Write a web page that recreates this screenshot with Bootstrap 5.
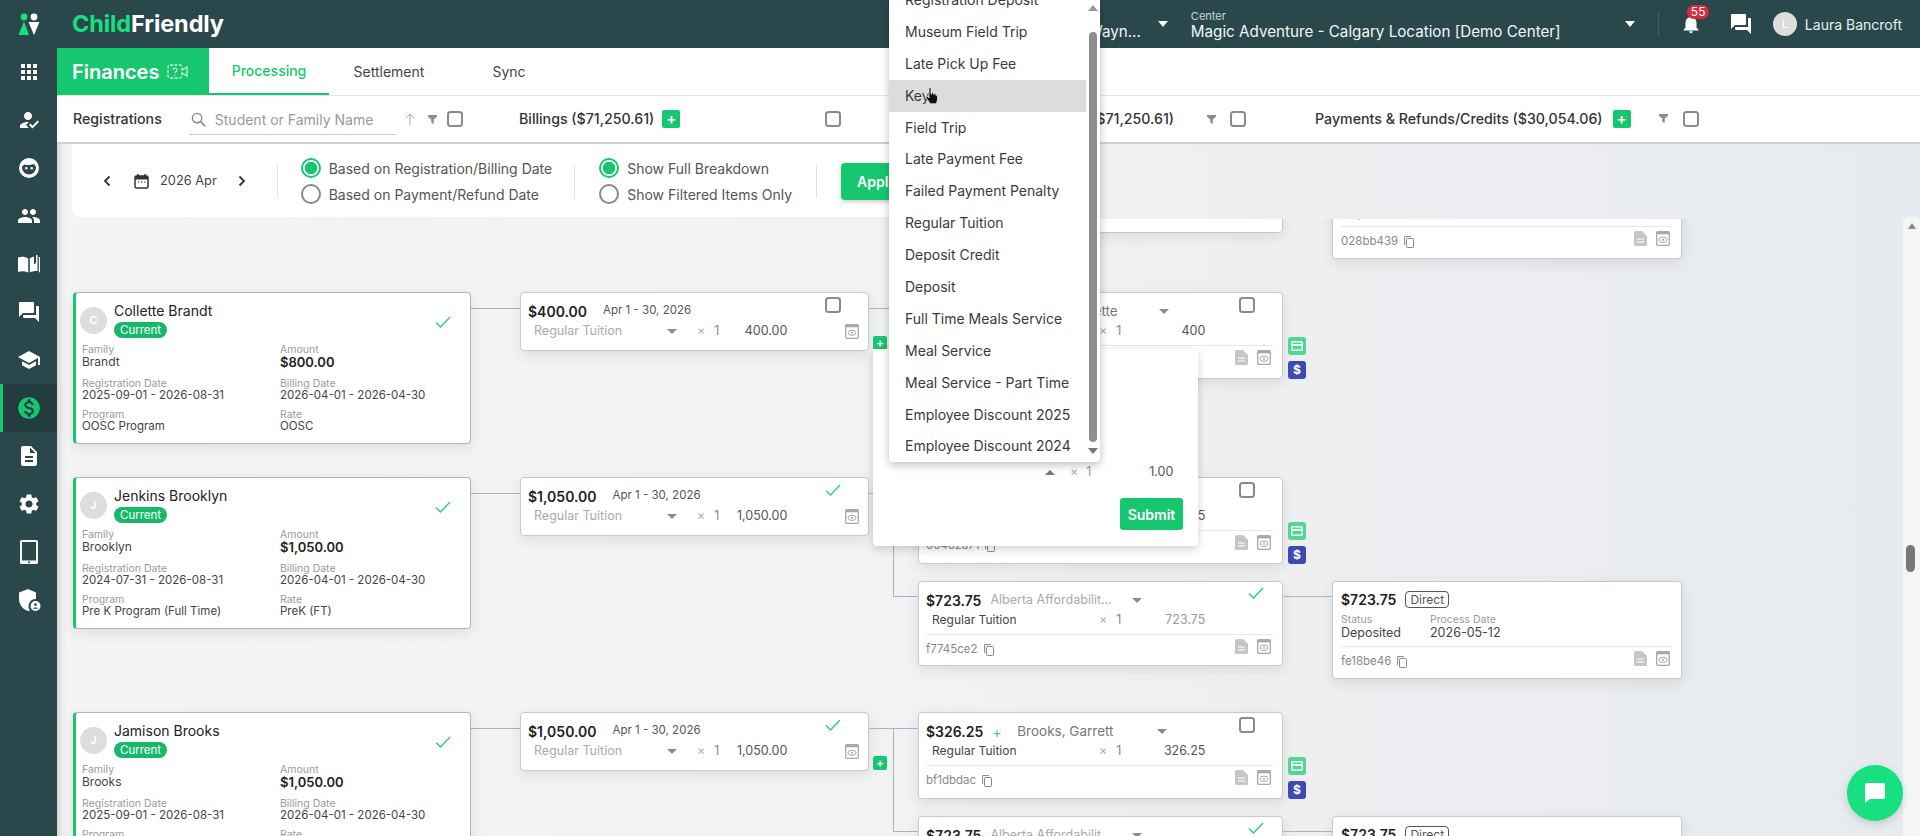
<!DOCTYPE html>
<html lang="en">
<head>
<meta charset="utf-8">
<title>ChildFriendly - Finances</title>
<link href="https://cdn.jsdelivr.net/npm/bootstrap@5.3.0/dist/css/bootstrap.min.css" rel="stylesheet">
<style>
html,body{height:100%;}
body{font-family:Inter,"Noto Sans","Liberation Sans",sans-serif;font-size:14px;color:#333;overflow:hidden;background:#f4f4f5;}
.shell{height:836px;width:1920px;overflow:hidden;}
.min0{min-width:0;min-height:0;}
.flex-none{flex:none;}
/* sidebar */
.rail{width:57px;background:#2a484c;flex:none;z-index:3;}
.rail-item{height:48px;color:#fff;border-left:3px solid transparent;padding-right:3px;}
.rail-item.on{background:#223c40;border-left-color:#17c76f;}
.rail-item svg{width:24px;height:24px;fill:#fff;display:block;}
.rail-item.on svg{fill:#17c76f;width:26px;height:26px;}
/* top */
.topbar{height:48px;background:#2a484c;color:#fff;flex:none;}
.brand{font-size:23.5px;font-weight:700;letter-spacing:-.1px;margin-left:15px;line-height:1;color:#fff;}
.brand b{color:#19e07f;font-weight:700;}
.sel-wrap{line-height:1.15;padding-top:3px;}
.sel-lab{font-size:11px;color:#c9d3d4;display:block;height:12px;line-height:12px;}
.sel-val{font-size:15.2px;color:#f2f5f5;display:block;line-height:20px;white-space:nowrap;}
.owner{width:110px;margin-left:auto;}
.owner .sel-val{text-align:right;}
.tri-w{width:0;height:0;border-left:5px solid transparent;border-right:5px solid transparent;border-top:6px solid #fff;flex:none;}
.owner-tri{margin-left:17px;margin-right:23px;}
.center-sel{width:370px;}
.center-tri{margin-left:64px;}
.top-div{width:1px;height:24px;background:#3f5f63;margin-left:23px;}
.bell{margin-left:21px;width:22px;height:22px;}
.bell svg{width:22px;height:22px;fill:#fff;display:block;}
.bell-count{top:-8px;left:7px;background:#d72a3a;color:#fff;font-size:12px;line-height:14px;padding:0 4px;border-radius:7px;}
.talk{margin-left:27px;width:24px;height:24px;fill:#fff;}
.who-a{width:24px;height:24px;background:#ddd;color:#fff;font-size:11px;margin-left:20px;}
.who{font-size:14px;margin-left:8px;margin-right:18px;color:#e9eeee;white-space:nowrap;}
/* tabs */
.tabbar{height:48px;background:#fff;border-bottom:1px solid #e6e6e6;flex:none;}
.fin{width:152px;background:#17c76f;color:#fff;font-size:20px;font-weight:600;padding-left:15px;height:47px;}
.fin svg{width:21px;height:19px;margin-left:8px;stroke:#c9f2dd;fill:none;}
.tabx{width:120px;height:47px;color:#444;font-size:14px;text-decoration:none;}
.tabx.on{color:#17c76f;border-bottom:2px solid #17c76f;font-weight:500;}
/* column titles */
.titlebar{height:48px;background:#fff;border-bottom:2px solid #cfd0d1;flex:none;color:#333;}
.tt{font-weight:500;font-size:14.2px;white-space:nowrap;color:#333;}
.tc1{width:462px;padding-left:16px;}
.tc2{width:655px;}
.tc3{width:141px;}
.srch{width:207px;margin-left:27px;border-bottom:1px solid #ccc;height:32px;color:#999;font-size:14px;padding-top:2px;}
.srch svg{width:15px;height:15px;stroke:#888;fill:none;margin:0 9px 0 2px;}
.arrowup{width:12px;height:12px;stroke:#aaa;fill:none;margin-left:8px;}
.funnel{width:9px;height:11px;fill:#8b8b8b;flex:none;}
.reg-f{margin-left:12px;}
.box{width:16px;height:16px;margin:0;border:2px solid #8a8a8a;border-radius:2px;flex:none;background:#fff;}
.reg-box{margin-left:10px;}
.plus{width:18px;height:18px;background:#17c76f;color:#fff;border-radius:2px;font-size:15px;line-height:17px;text-align:center;font-weight:600;flex:none;}
.branch .plus{width:14px;height:14px;font-size:12px;line-height:13px;margin:27px 0 0 4px;}
.billing-box{margin-left:145px;}
.item-f{margin-left:33px;}
.item-box{margin-left:14px;}
.pay-plus{margin-left:10px;}
.pay-f{margin-left:28px;}
.pay-box{margin-left:15px;}
/* content */
.canvas{background:linear-gradient(90deg,#f4f4f5 0%,#f1f2f3 45%,#e7eaee 100%);box-shadow:inset 9px 0 8px -7px rgba(0,0,0,.18);}
.panel{margin-left:15px;width:1000px;height:73px;background:#fff;border-radius:0 0 8px 8px;flex:none;font-size:14px;color:#555;padding-top:1px;}
.chev{width:8px;height:12px;stroke:#333;fill:none;stroke-width:1.8;}
.cal{width:15px;height:15px;}
.month{font-size:12.8px;color:#444;}
.vdiv{width:1px;height:33px;background:#e3e3e3;flex:none;}
.rad{width:20px;height:20px;margin:0;border:2px solid #888;background-color:#fff;flex:none;}
.rad:checked{border-color:#17c76f;background-color:#fff;background-image:radial-gradient(circle,#17c76f 0 6px,#fff 6.5px);}
.radline{height:26px;margin:0;}
.apply{background:#17c76f;color:#fff;border:0;font-weight:600;font-size:14px;width:110px;height:37px;border-radius:4px;text-align:left;padding-left:16px;box-shadow:0 2px 4px rgba(0,0,0,.2);}
.panel-prev{margin-left:31px;}
.panel-cal{margin-left:23px;}
.panel-month{margin-left:11px;}
.panel-next{margin-left:21px;}
.panel-d1{margin-left:31px;}
.panel-r1{margin-left:23px;}
.panel-d2{margin-left:22px;}
.panel-r2{margin-left:24px;}
.panel-d3{margin-left:24px;}
.panel-apply{margin-left:24px;}
.scroller{height:618px;margin-top:2px;overflow:hidden;flex:none;}
.tree{margin-top:-73px;padding-left:16px;}
.tgroup{display:flex;align-items:flex-start;margin-bottom:33px;}
.gap0{width:845px;flex:none;}
.cardx{background:#fff;border:1px solid #c9c9c9;border-radius:4px;box-shadow:0 4px 14px rgba(0,0,0,.09);flex:none;}
.regc{width:398px;height:152px;border-left:3px solid #17c76f;border-color:#b4b4b4 #b4b4b4 #b4b4b4 #17c76f;padding:10px 6px 0 4px;position:relative;}
.ava{width:27px;height:27px;background:#ddd;color:#fff;font-size:11px;font-weight:600;margin-top:4px;}
.nm{font-size:14px;line-height:16px;color:#222;font-weight:400;}
.head-gap{gap:7px;}
.cur{background:#17b86a;color:#fff;font-size:11.5px;line-height:16px;height:16px;padding:0 6px;border-radius:8px;font-weight:400;margin-top:3px;display:inline-block;vertical-align:top;}
.okk{width:16px;height:12px;stroke:#2ad083;fill:none;stroke-width:1.4;flex:none;}
.regc .okk{position:absolute;left:359px;top:23px;}
.grid2{display:grid;grid-template-columns:198px 1fr;grid-template-rows:34px 31px auto;margin:4px 0 0 2px;}
.lab{font-size:10.5px;line-height:12px;color:#9a9a9a;display:block;}
.val{font-size:11.5px;line-height:12px;color:#444;display:block;white-space:nowrap;}
.tight .val{margin-top:-1px;}
.val.big{font-size:13px;font-weight:600;color:#222;}
.val.fam{font-size:12px;}
.lnk{width:49px;margin-top:16px;border-top:1.5px solid #b3b3b3;flex:none;}
.billc{width:349px;height:59px;padding:8px 9px 0 7px;}
.rowx{display:flex;align-items:center;height:20px;}
.amt{font-size:14px;font-weight:600;color:#222;white-space:nowrap;}
.dt{font-size:11.5px;color:#555;margin-left:16px;white-space:nowrap;}
.bname{font-size:12.5px;color:#aaa;margin-left:6px;width:133px;white-space:nowrap;}
.tri-g{width:0;height:0;border-left:5px solid transparent;border-right:5px solid transparent;border-top:5px solid #8c8c8c;flex:none;}
.xx{font-size:12.5px;color:#aaa;margin-left:20px;}
.one{font-size:12.5px;color:#888;margin-left:9px;}
.sum{font-size:12.5px;color:#555;text-align:right;flex:none;}
.bill-sum{width:68px;}
.eyeb{width:14px;height:15px;flex:none;}
.mk{margin-left:auto;margin-right:18px;margin-top:-12px;}
.branch{width:24px;margin-top:16px;border-top:1.5px solid #b3b3b3;flex:none;}
.trunk{width:25px;margin-top:16px;height:1.5px;border-top:1.5px solid #b3b3b3;flex:none;}
.trunk.tall{height:104px;border-left:1.5px solid #b3b3b3;border-bottom:1.5px solid #b3b3b3;}
.itemcol{display:flex;flex-direction:column;gap:17px;flex:none;}
.itemrow{display:flex;align-items:flex-start;}
.itemc{width:365px;height:87px;padding:8px 9px 0 7px;}
.itemc.short{height:85px;}
.inm{font-size:13.5px;color:#777;margin-left:15px;width:140px;white-space:nowrap;overflow:hidden;}
.inm.alb{color:#aaa;margin-left:9px;width:142px;font-size:12.5px;}
.pl{color:#2ad083;font-size:14px;margin-left:9px;width:10px;}
.rname{font-size:12px;color:#444;margin-left:6px;width:167px;white-space:nowrap;}
.xx2{font-size:12.5px;color:#aaa;}
.one2{font-size:12.5px;color:#888;margin-left:9px;}
.sum2{width:84px;}
.sum2.gr{color:#999;}
.sepx{border-top:1px solid #e8e8e8;margin-top:4px;}
.foot{height:30px;display:flex;align-items:center;font-size:11.5px;color:#888;}
.cp{width:10px;height:12px;margin-left:6px;stroke:#888;fill:none;flex:none;}
.doc{width:13px;height:15px;margin-left:auto;flex:none;margin-top:-7px;}
.foot .eyeb{margin-left:9px;margin-right:2px;margin-top:-7px;}
.item-mark{margin-right:18px;margin-left:auto;}
.ok-i{margin-right:9px;margin-top:-14px;}
.side{width:49px;flex:none;}
.sidebtn{width:18px;height:18px;border-radius:3px;margin-left:5px;color:#fff;font-size:12px;font-weight:700;line-height:18px;text-align:center;}
.sidebtn.g{background:#4fd794;margin-top:45px;overflow:hidden;}
.sidebtn.b{background:#3f49b4;margin-top:6px;}
.sidebtn svg{width:12px;height:10px;display:block;margin:4px auto 0;}
.plink{margin-top:15px;border-top:1.5px solid #b3b3b3;}
.payc{width:350px;height:98px;padding:7px 9px 0 8px;}
.payc.tallp{height:113px;padding-top:22px;}
.direct{border:1px solid #555;border-radius:4px;font-size:12px;line-height:15px;height:17px;padding:0 4px;color:#555;margin-left:9px;}
.payf{display:grid;grid-template-columns:89px 1fr;margin-top:5px;}
.payf .val{font-size:12.5px;line-height:14px;}
.payc .sepx{margin-top:6px;}
/* scrollbar */
.gutter{width:17px;top:218px;right:0;bottom:0;background:#f4f5f6;}
.up-a{width:0;height:0;border-left:4px solid transparent;border-right:4px solid transparent;border-bottom:6px solid #888;margin:5px auto 0;}
.thumb{width:9px;height:27px;background:#777;border-radius:5px;margin:316px 0 0 3px;}
.fab{width:56px;height:56px;background:#16e07f;right:17px;top:765px;box-shadow:0 3px 8px rgba(0,0,0,.15);}
.fab svg{width:24px;height:24px;fill:#fff;}
/* popup + menu */
.popx{left:873px;top:349px;width:325px;height:197px;background:#fff;border-radius:0 0 4px 4px;box-shadow:0 3px 10px rgba(0,0,0,.18);z-index:4;}
.pop-line{position:absolute;top:114px;left:0;width:325px;height:18px;}
.tri-up{width:0;height:0;border-left:5px solid transparent;border-right:5px solid transparent;border-bottom:5px solid #777;margin-left:172px;}
.pop-x{margin-left:15px;font-size:12.5px;color:#aaa;}
.pop-1{margin-left:8px;font-size:12.5px;color:#999;}
.pop-s{margin-left:52px;width:30px;font-size:12.5px;color:#555;text-align:right;white-space:nowrap;}
.submitx{position:absolute;left:247px;top:149px;width:63px;height:32px;background:#17c76f;color:#fff;font-size:14px;font-weight:600;border:0;border-radius:3px;padding:0;}
.menux{display:block;left:889px;top:0;width:211px;height:462px;margin:0!important;padding:0;border:0;border-radius:0 0 4px 4px;box-shadow:0 3px 10px rgba(0,0,0,.25);z-index:5;overflow:hidden;}
.menux .dropdown-item{height:31.9px;line-height:31.9px;padding:0 0 0 16px;font-size:14px;color:#3a3a3a;width:197px;}
.menux .dropdown-item.hov{background:#dcdcdc;}
.menu-list{margin:0;padding:0;list-style:none;margin-top:-16px;}
.m-sb{top:0;right:3px;width:8px;height:462px;}
.m-up{width:0;height:0;border-left:5px solid transparent;border-right:5px solid transparent;border-bottom:6px solid #999;margin:5px 0 0 -1px;}
.m-th{width:8px;height:410px;background:#8f8f8f;border-radius:4px;margin-top:21px;}
.m-dn{width:0;height:0;border-left:5px solid transparent;border-right:5px solid transparent;border-top:6px solid #777;margin:6px 0 0 -1px;}
.hand{left:925px;top:87px;width:13px;height:18px;z-index:6;}
</style>
</head>
<body>
<svg class="d-none" xmlns="http://www.w3.org/2000/svg">
<symbol id="i-eye" viewBox="0 0 14 15"><rect x=".7" y=".7" width="12.6" height="13.6" rx="1" fill="none" stroke="#a9a9a9" stroke-width="1.3"/><rect x=".7" y=".7" width="12.6" height="2.6" fill="#a9a9a9"/><ellipse cx="7" cy="8.8" rx="4" ry="2.6" fill="none" stroke="#a9a9a9"/><circle cx="7" cy="8.8" r="1.1" fill="#a9a9a9"/></symbol>
<symbol id="i-doc" viewBox="0 0 13 15"><path d="M1.5 0h6.5l5 5v8.5a1.5 1.5 0 0 1-1.5 1.5h-10A1.5 1.5 0 0 1 0 13.5v-12A1.5 1.5 0 0 1 1.5 0z" fill="#c6c6c6"/><path d="M3 8h7M3 11h7" stroke="#fff" stroke-width="1.2"/></symbol>
<symbol id="i-copy" viewBox="0 0 10 12"><rect x="2.5" y="2.5" width="7" height="9" rx=".8"/><path d="M.6 9V.6H7"/></symbol>
<symbol id="i-ok" viewBox="0 0 16 12"><path d="M1 6.5l4.500 4.500L15 1"/></symbol>
<symbol id="i-fun" viewBox="0 0 11 11"><path d="M0 0h11v2L7 5.500V11L4 9.500V5.500L0 2z"/></symbol>
<symbol id="i-card" viewBox="0 0 12 10"><rect x=".7" y=".7" width="10.6" height="8.6" rx="1" fill="none" stroke="#fff" stroke-width="1.4"/><rect x="1" y="3" width="10" height="1.8" fill="#fff"/></symbol>
</svg>

<div class="shell d-flex position-relative">
  <nav class="rail d-flex flex-column">
    <a class="rail-item d-flex align-items-center justify-content-center">
      <svg viewBox="0 0 24 24"><circle cx="7" cy="5" r="3.4" fill="#19e07f"/><path d="M7 9.5L12 23H1.5z" fill="#19e07f"/><circle cx="17" cy="5" r="3.4"/><path d="M11.5 10h11l-5.500 13z"/></svg>
    </a>
    <a class="rail-item d-flex align-items-center justify-content-center">
      <svg viewBox="0 0 24 24"><path d="M4 4h4v4H4zM10 4h4v4h-4zM16 4h4v4h-4zM4 10h4v4H4zM10 10h4v4h-4zM16 10h4v4h-4zM4 16h4v4H4zM10 16h4v4h-4zM16 16h4v4h-4z"/></svg>
    </a>
    <a class="rail-item d-flex align-items-center justify-content-center">
      <svg viewBox="0 0 24 24"><path d="M9 17l3-2.940c-.39-.04-.68-.06-1-.06-2.670 0-8 1.340-8 4v2h9l-3-3zm2-5c2.210 0 4-1.790 4-4s-1.790-4-4-4-4 1.790-4 4 1.790 4 4 4"/><path d="M15.470 20.500L12 17l1.400-1.410 2.070 2.070 5.130-5.160 1.400 1.410z"/></svg>
    </a>
    <a class="rail-item d-flex align-items-center justify-content-center">
      <svg viewBox="0 0 24 24"><path fill-rule="evenodd" d="M12 2a10 10 0 1 1 0 20 10 10 0 0 1 0-20zM5 11.5a7 7 0 0 0 14 0c0-1.500-1-3-3-3.500-1.500 1-5.500 1.500-8 .5-1.800.5-3 1.500-3 3zm4.300-.5a1.300 1.300 0 1 0 0 2.600 1.300 1.300 0 0 0 0-2.600zm5.400 0a1.300 1.300 0 1 0 0 2.600 1.300 1.300 0 0 0 0-2.600z"/></svg>
    </a>
    <a class="rail-item d-flex align-items-center justify-content-center">
      <svg viewBox="0 0 24 24"><path d="M16 11c1.660 0 2.990-1.340 2.990-3S17.660 5 16 5c-1.660 0-3 1.340-3 3s1.340 3 3 3zm-8 0c1.660 0 2.990-1.340 2.990-3S9.660 5 8 5C6.340 5 5 6.340 5 8s1.340 3 3 3zm0 2c-2.330 0-7 1.170-7 3.500V19h14v-2.500c0-2.330-4.670-3.500-7-3.500zm8 0c-.29 0-.62.02-.97.05 1.160.84 1.970 1.970 1.970 3.450V19h6v-2.500c0-2.330-4.670-3.500-7-3.500z"/></svg>
    </a>
    <a class="rail-item d-flex align-items-center justify-content-center">
      <svg viewBox="0 0 24 24"><path d="M1 5.500c3-1 7-1 10.200 1v14C8 19 4 19 1 20zM12.800 6.500c1.300-1 2.800-1.700 4.200-2v8l2-1.500V3h1.500v16c-2.700-.2-5.400.3-7.700 1.500zM21.800 5H23v15.200h-1.200z"/></svg>
    </a>
    <a class="rail-item d-flex align-items-center justify-content-center">
      <svg viewBox="0 0 24 24"><path d="M21 6h-2v9H6v2c0 .55.45 1 1 1h11l4 4V7c0-.55-.45-1-1-1zm-4 6V3c0-.55-.45-1-1-1H3c-.55 0-1 .45-1 1v14l4-4h10c.55 0 1-.45 1-1z"/></svg>
    </a>
    <a class="rail-item d-flex align-items-center justify-content-center">
      <svg viewBox="0 0 24 24"><path d="M5 13.180v4L12 21l7-3.820v-4L12 17l-7-3.820zM12 3L1 9l11 6 9-4.910V17h2V9L12 3z"/></svg>
    </a>
    <a class="rail-item on d-flex align-items-center justify-content-center">
      <svg viewBox="0 0 24 24"><path d="M12 2C6.480 2 2 6.480 2 12s4.480 10 10 10 10-4.480 10-10S17.520 2 12 2zm1.410 16.090V20h-2.670v-1.930c-1.710-.36-3.160-1.460-3.270-3.400h1.960c.1 1.050.82 1.870 2.650 1.870 1.960 0 2.400-.98 2.400-1.590 0-.83-.44-1.610-2.670-2.140-2.480-.6-4.180-1.620-4.180-3.670 0-1.720 1.390-2.840 3.110-3.210V4h2.670v1.950c1.860.45 2.790 1.860 2.870 3.390H14.300c-.05-1.110-.64-1.870-2.220-1.870-1.500 0-2.400.68-2.400 1.640 0 .84.65 1.390 2.670 1.910s4.180 1.390 4.180 3.910c-.01 1.830-1.380 2.830-3.120 3.160z"/></svg>
    </a>
    <a class="rail-item d-flex align-items-center justify-content-center">
      <svg viewBox="0 0 24 24"><path d="M14 2H6c-1.100 0-1.990.9-1.990 2L4 20c0 1.100.89 2 1.990 2H18c1.100 0 2-.9 2-2V8l-6-6zm2 16H8v-2h8v2zm0-4H8v-2h8v2zm-3-5V3.500L18.500 9H13z"/></svg>
    </a>
    <a class="rail-item d-flex align-items-center justify-content-center">
      <svg viewBox="0 0 24 24"><path d="M19.140 12.940c.04-.3.06-.61.06-.94 0-.32-.02-.64-.07-.94l2.030-1.580c.18-.14.23-.41.12-.61l-1.920-3.320c-.12-.22-.37-.29-.59-.22l-2.390.96c-.5-.38-1.030-.7-1.620-.94l-.36-2.540c-.04-.24-.24-.41-.48-.41h-3.840c-.24 0-.43.17-.47.41l-.36 2.540c-.59.24-1.130.57-1.620.94l-2.390-.96c-.22-.08-.47 0-.59.22L2.740 8.870c-.12.21-.08.47.12.61l2.030 1.580c-.05.3-.09.63-.09.94s.02.64.07.94l-2.030 1.580c-.18.14-.23.41-.12.61l1.920 3.320c.12.22.37.29.59.22l2.390-.96c.5.38 1.030.7 1.620.94l.36 2.540c.05.24.24.41.48.41h3.840c.24 0 .44-.17.47-.41l.36-2.540c.59-.24 1.130-.56 1.620-.94l2.390.96c.22.08.47 0 .59-.22l1.920-3.320c.12-.22.07-.47-.12-.61l-2.010-1.580zM12 15.600c-1.980 0-3.600-1.620-3.600-3.600s1.620-3.600 3.600-3.600 3.600 1.620 3.600 3.600-1.620 3.600-3.600 3.600z"/></svg>
    </a>
    <a class="rail-item d-flex align-items-center justify-content-center">
      <svg viewBox="0 0 24 24"><path fill-rule="evenodd" d="M4.500 0h15A1.500 1.500 0 0 1 21 1.500v21a1.500 1.500 0 0 1-1.500 1.500h-15A1.500 1.500 0 0 1 3 22.500v-21A1.500 1.500 0 0 1 4.500 0zM5 2v18.500h14V2zm7 19.200a1 1 0 1 0 0 2 1 1 0 0 0 0-2z"/></svg>
    </a>
    <a class="rail-item d-flex align-items-center justify-content-center">
      <svg viewBox="0 0 24 24"><path d="M11 1L2 4.500v6.500c0 5.500 3.800 10.500 9 12 .7-.2 1.300-.4 1.900-.8A7 7 0 0 1 19 11.100V4.500z"/><path fill-rule="evenodd" d="M18.500 13a5 5 0 1 1 0 10 5 5 0 0 1 0-10zm0 2.200a1.400 1.400 0 1 0 0 2.800 1.400 1.400 0 0 0 0-2.800zm-2.500 5.600h5c-.3-1.700-4.700-1.700-5 0z"/></svg>
    </a>
  </nav>

  <main class="d-flex flex-column flex-grow-1 min0">
    <header class="topbar d-flex align-items-center">
      <span class="brand"><b>Child</b>Friendly</span>
      <div class="owner sel-wrap"><span class="sel-lab">Owner</span><span class="sel-val">Bruce Wayn...</span></div>
      <span class="tri-w owner-tri"></span>
      <div class="center-sel sel-wrap"><span class="sel-lab">Center</span><span class="sel-val">Magic Adventure - Calgary Location [Demo Center]</span></div>
      <span class="tri-w center-tri"></span>
      <span class="top-div"></span>
      <span class="bell position-relative">
        <svg viewBox="0 0 24 24"><path d="M12 22c1.100 0 2-.9 2-2h-4c0 1.100.89 2 2 2zm6-6v-5c0-3.070-1.640-5.640-4.500-6.320V4c0-.83-.67-1.500-1.500-1.500s-1.500.67-1.500 1.500v.68C7.630 5.360 6 7.920 6 11v5l-2 2v1h16v-1l-2-2z"/></svg>
        <span class="bell-count position-absolute">55</span>
      </span>
      <svg class="talk" viewBox="0 0 24 24"><path d="M21 6h-2v9H6v2c0 .55.45 1 1 1h11l4 4V7c0-.55-.45-1-1-1zm-4 6V3c0-.55-.45-1-1-1H3c-.55 0-1 .45-1 1v14l4-4h10c.55 0 1-.45 1-1z"/></svg>
      <span class="who-a rounded-circle d-flex align-items-center justify-content-center">L</span>
      <span class="who">Laura Bancroft</span>
    </header>

    <div class="tabbar d-flex">
      <div class="fin d-flex align-items-center">Finances
        <svg viewBox="0 0 21 19"><rect x="1" y="3" width="14" height="13" rx="2" stroke-dasharray="3 1.5" stroke-width="1.3"/><path d="M15 8l5-3v9l-5-3" stroke-width="1.3"/><path d="M6 8a2 2 0 1 1 2.500 2c-.5.2-.5.6-.5 1.300M8 13v.8" stroke-width="1.2"/></svg>
      </div>
      <a class="tabx on d-flex align-items-center justify-content-center">Processing</a>
      <a class="tabx d-flex align-items-center justify-content-center">Settlement</a>
      <a class="tabx d-flex align-items-center justify-content-center">Sync</a>
    </div>

    <div class="titlebar d-flex align-items-center">
      <div class="tc1 d-flex align-items-center">
        <span class="tt">Registrations</span>
        <div class="srch d-flex align-items-center">
          <svg viewBox="0 0 16 16"><circle cx="6.5" cy="6.5" r="5" stroke-width="1.5"/><path d="M10.500 10.500L15 15" stroke-width="1.7"/></svg>Student or Family Name
        </div>
        <svg class="arrowup" viewBox="0 0 12 12"><path d="M6 12V1M2 5l4-4 4 4"/></svg>
        <svg class="funnel reg-f"><use href="#i-fun"/></svg>
        <input class="form-check-input box reg-box" type="checkbox" aria-label="Select registrations">
      </div>
      <div class="tc2 d-flex align-items-center">
        <span class="tt">Billings ($71,250.61)</span>
        <span class="plus ms-2">+</span>
        <input class="form-check-input box billing-box" type="checkbox" aria-label="Select billings">
        <span class="tt ms-auto">Items ($71,250.61)</span>
      </div>
      <div class="tc3 d-flex align-items-center">
        <svg class="funnel item-f"><use href="#i-fun"/></svg>
        <input class="form-check-input box item-box" type="checkbox" aria-label="Select items">
      </div>
      <div class="d-flex align-items-center">
        <span class="tt">Payments &amp; Refunds/Credits ($30,054.06)</span>
        <span class="plus pay-plus">+</span>
        <svg class="funnel pay-f"><use href="#i-fun"/></svg>
        <input class="form-check-input box pay-box" type="checkbox" aria-label="Select payments">
      </div>
    </div>

    <div class="canvas flex-grow-1 d-flex flex-column position-relative min0">
      <div class="panel d-flex align-items-center">
        <svg class="chev panel-prev" viewBox="0 0 8 12"><path d="M6.5 1.5L2 6l4.500 4.500"/></svg>
        <svg class="cal panel-cal" viewBox="0 0 15 15"><rect x="1" y="2" width="13" height="12" rx="1.5" fill="none" stroke="#333" stroke-width="1.5"/><rect x="1" y="2" width="13" height="3.5" fill="#333"/><path d="M4 0v3M11 0v3" stroke="#333" stroke-width="1.5"/><path d="M4 8h1.500M7 8h1.500M10 8h1.500" stroke="#333"/></svg>
        <span class="month panel-month">2026 Apr</span>
        <svg class="chev panel-next" viewBox="0 0 8 12"><path d="M1.5 1.5L6 6l-4.500 4.500"/></svg>
        <span class="vdiv panel-d1"></span>
        <div class="panel-r1">
          <label class="radline d-flex align-items-center"><input class="form-check-input rad" type="radio" name="basis" checked><span class="ms-2">Based on Registration/Billing Date</span></label>
          <label class="radline d-flex align-items-center"><input class="form-check-input rad" type="radio" name="basis"><span class="ms-2">Based on Payment/Refund Date</span></label>
        </div>
        <span class="vdiv panel-d2"></span>
        <div class="panel-r2">
          <label class="radline d-flex align-items-center"><input class="form-check-input rad" type="radio" name="brk" checked><span class="ms-2">Show Full Breakdown</span></label>
          <label class="radline d-flex align-items-center"><input class="form-check-input rad" type="radio" name="brk"><span class="ms-2">Show Filtered Items Only</span></label>
        </div>
        <span class="vdiv panel-d3"></span>
        <button class="apply panel-apply" type="button">Apply</button>
      </div>

      <div class="scroller">
        <div class="tree">

          <div class="tgroup">
            <div class="gap0"></div>
            <div class="itemrow">
              <div class="cardx itemc">
                <div class="rowx"><span class="amt">$380.00</span><span class="inm alb">Regular Tuition</span></div>
                <div class="rowx"></div>
                <div class="sepx"></div>
                <div class="foot"><span>7ac2e410</span><svg class="cp"><use href="#i-copy"/></svg><svg class="doc"><use href="#i-doc"/></svg><svg class="eyeb"><use href="#i-eye"/></svg></div>
              </div>
              <div class="side"><div class="plink"></div></div>
              <div class="cardx payc tallp">
                <div class="rowx"><span class="amt">$380.00</span><span class="direct">Direct</span></div>
                <div class="payf"><div><span class="lab">Status</span><span class="val">Deposited</span></div><div><span class="lab">Process Date</span><span class="val">2026-04-28</span></div></div>
                <div class="sepx"></div>
                <div class="foot"><span>028bb439</span><svg class="cp"><use href="#i-copy"/></svg><svg class="doc"><use href="#i-doc"/></svg><svg class="eyeb"><use href="#i-eye"/></svg></div>
              </div>
            </div>
          </div>

          <!-- Collette -->
          <div class="tgroup">
            <div class="cardx regc">
              <div class="d-flex head-gap"><span class="ava rounded-circle d-flex align-items-center justify-content-center flex-none">C</span><div><div class="nm">Collette Brandt</div><span class="cur">Current</span></div></div>
              <svg class="okk"><use href="#i-ok"/></svg>
              <div class="grid2">
                <div><span class="lab">Family</span><span class="val fam">Brandt</span></div><div><span class="lab">Amount</span><span class="val big">$800.00</span></div>
                <div class="tight"><span class="lab">Registration Date</span><span class="val">2025-09-01 - 2026-08-31</span></div><div class="tight"><span class="lab">Billing Date</span><span class="val">2026-04-01 - 2026-04-30</span></div>
                <div class="tight"><span class="lab">Program</span><span class="val">OOSC Program</span></div><div class="tight"><span class="lab">Rate</span><span class="val">OOSC</span></div>
              </div>
            </div>
            <div class="lnk"></div>
            <div class="cardx billc">
              <div class="rowx"><span class="amt">$400.00</span><span class="dt">Apr 1 - 30, 2026</span><input class="form-check-input box mk" type="checkbox" aria-label="Select billing"></div>
              <div class="rowx"><span class="bname">Regular Tuition</span><span class="tri-g"></span><span class="xx">×</span><span class="one">1</span><span class="sum bill-sum">400.00</span><svg class="eyeb ms-auto"><use href="#i-eye"/></svg></div>
            </div>
            <div class="branch"><div class="plus">+</div></div>
            <div class="trunk"></div>
            <div class="itemcol">
              <div class="itemrow">
                <div class="cardx itemc">
                  <div class="rowx"><span class="amt">$400.00</span><span class="pl">+</span><span class="inm">Brandt, Collette</span><span class="tri-g"></span><input class="form-check-input box mk item-mark" type="checkbox" aria-label="Select item"></div>
                  <div class="rowx"><span class="rname">Regular Tuition</span><span class="xx2">×</span><span class="one2">1</span><span class="sum sum2">400</span></div>
                  <div class="sepx"></div>
                  <div class="foot"><span>3ba91c04</span><svg class="cp"><use href="#i-copy"/></svg><svg class="doc"><use href="#i-doc"/></svg><svg class="eyeb"><use href="#i-eye"/></svg></div>
                </div>
                <div class="side"><div class="sidebtn g"><svg><use href="#i-card"/></svg></div><div class="sidebtn b">$</div></div>
              </div>
            </div>
          </div>

          <!-- Jenkins -->
          <div class="tgroup">
            <div class="cardx regc">
              <div class="d-flex head-gap"><span class="ava rounded-circle d-flex align-items-center justify-content-center flex-none">J</span><div><div class="nm">Jenkins Brooklyn</div><span class="cur">Current</span></div></div>
              <svg class="okk"><use href="#i-ok"/></svg>
              <div class="grid2">
                <div><span class="lab">Family</span><span class="val fam">Brooklyn</span></div><div><span class="lab">Amount</span><span class="val big">$1,050.00</span></div>
                <div class="tight"><span class="lab">Registration Date</span><span class="val">2024-07-31 - 2026-08-31</span></div><div class="tight"><span class="lab">Billing Date</span><span class="val">2026-04-01 - 2026-04-30</span></div>
                <div class="tight"><span class="lab">Program</span><span class="val">Pre K Program (Full Time)</span></div><div class="tight"><span class="lab">Rate</span><span class="val">PreK (FT)</span></div>
              </div>
            </div>
            <div class="lnk"></div>
            <div class="cardx billc">
              <div class="rowx"><span class="amt">$1,050.00</span><span class="dt">Apr 1 - 30, 2026</span><svg class="okk mk"><use href="#i-ok"/></svg></div>
              <div class="rowx"><span class="bname">Regular Tuition</span><span class="tri-g"></span><span class="xx">×</span><span class="one">1</span><span class="sum bill-sum">1,050.00</span><svg class="eyeb ms-auto"><use href="#i-eye"/></svg></div>
            </div>
            <div class="branch"></div>
            <div class="trunk tall"></div>
            <div class="itemcol">
              <div class="itemrow">
                <div class="cardx itemc">
                  <div class="rowx"><span class="amt">$326.25</span><span class="pl">+</span><span class="inm">Brooklyn, Jenkins</span><span class="tri-g"></span><input class="form-check-input box mk item-mark" type="checkbox" aria-label="Select item"></div>
                  <div class="rowx"><span class="rname">Regular Tuition</span><span class="xx2">×</span><span class="one2">1</span><span class="sum sum2">326.25</span></div>
                  <div class="sepx"></div>
                  <div class="foot"><span>66462a71</span><svg class="cp"><use href="#i-copy"/></svg><svg class="doc"><use href="#i-doc"/></svg><svg class="eyeb"><use href="#i-eye"/></svg></div>
                </div>
                <div class="side"><div class="sidebtn g"><svg><use href="#i-card"/></svg></div><div class="sidebtn b">$</div></div>
              </div>
              <div class="itemrow">
                <div class="cardx itemc short">
                  <div class="rowx"><span class="amt">$723.75</span><span class="inm alb">Alberta Affordabilit...</span><span class="tri-g"></span><svg class="okk mk ok-i"><use href="#i-ok"/></svg></div>
                  <div class="rowx"><span class="rname">Regular Tuition</span><span class="xx2">×</span><span class="one2">1</span><span class="sum sum2 gr">723.75</span></div>
                  <div class="sepx"></div>
                  <div class="foot"><span>f7745ce2</span><svg class="cp"><use href="#i-copy"/></svg><svg class="doc"><use href="#i-doc"/></svg><svg class="eyeb"><use href="#i-eye"/></svg></div>
                </div>
                <div class="side"><div class="plink"></div></div>
                <div class="cardx payc">
                  <div class="rowx"><span class="amt">$723.75</span><span class="direct">Direct</span></div>
                  <div class="payf"><div><span class="lab">Status</span><span class="val">Deposited</span></div><div><span class="lab">Process Date</span><span class="val">2026-05-12</span></div></div>
                  <div class="sepx"></div>
                  <div class="foot"><span>fe18be46</span><svg class="cp"><use href="#i-copy"/></svg><svg class="doc"><use href="#i-doc"/></svg><svg class="eyeb"><use href="#i-eye"/></svg></div>
                </div>
              </div>
            </div>
          </div>

          <!-- Jamison -->
          <div class="tgroup">
            <div class="cardx regc">
              <div class="d-flex head-gap"><span class="ava rounded-circle d-flex align-items-center justify-content-center flex-none">J</span><div><div class="nm">Jamison Brooks</div><span class="cur">Current</span></div></div>
              <svg class="okk"><use href="#i-ok"/></svg>
              <div class="grid2">
                <div><span class="lab">Family</span><span class="val fam">Brooks</span></div><div><span class="lab">Amount</span><span class="val big">$1,050.00</span></div>
                <div class="tight"><span class="lab">Registration Date</span><span class="val">2025-09-01 - 2026-08-31</span></div><div class="tight"><span class="lab">Billing Date</span><span class="val">2026-04-01 - 2026-04-30</span></div>
                <div class="tight"><span class="lab">Program</span><span class="val">Pre K Program (Full Time)</span></div><div class="tight"><span class="lab">Rate</span><span class="val">PreK (FT)</span></div>
              </div>
            </div>
            <div class="lnk"></div>
            <div class="cardx billc">
              <div class="rowx"><span class="amt">$1,050.00</span><span class="dt">Apr 1 - 30, 2026</span><svg class="okk mk"><use href="#i-ok"/></svg></div>
              <div class="rowx"><span class="bname">Regular Tuition</span><span class="tri-g"></span><span class="xx">×</span><span class="one">1</span><span class="sum bill-sum">1,050.00</span><svg class="eyeb ms-auto"><use href="#i-eye"/></svg></div>
            </div>
            <div class="branch"><div class="plus">+</div></div>
            <div class="trunk tall"></div>
            <div class="itemcol">
              <div class="itemrow">
                <div class="cardx itemc">
                  <div class="rowx"><span class="amt">$326.25</span><span class="pl">+</span><span class="inm">Brooks, Garrett</span><span class="tri-g"></span><input class="form-check-input box mk item-mark" type="checkbox" aria-label="Select item"></div>
                  <div class="rowx"><span class="rname">Regular Tuition</span><span class="xx2">×</span><span class="one2">1</span><span class="sum sum2">326.25</span></div>
                  <div class="sepx"></div>
                  <div class="foot"><span>bf1dbdac</span><svg class="cp"><use href="#i-copy"/></svg><svg class="doc"><use href="#i-doc"/></svg><svg class="eyeb"><use href="#i-eye"/></svg></div>
                </div>
                <div class="side"><div class="sidebtn g"><svg><use href="#i-card"/></svg></div><div class="sidebtn b">$</div></div>
              </div>
              <div class="itemrow">
                <div class="cardx itemc short">
                  <div class="rowx"><span class="amt">$723.75</span><span class="inm alb">Alberta Affordabilit...</span><span class="tri-g"></span><svg class="okk mk ok-i"><use href="#i-ok"/></svg></div>
                </div>
                <div class="side"><div class="plink"></div></div>
                <div class="cardx payc">
                  <div class="rowx"><span class="amt">$723.75</span><span class="direct">Direct</span></div>
                </div>
              </div>
            </div>
          </div>

        </div>
      </div>
    </div>
  </main>

  <div class="gutter position-absolute"><div class="up-a"></div><div class="thumb"></div></div>

  <div class="popx position-absolute">
    <div class="pop-line d-flex align-items-center"><span class="tri-up"></span><span class="pop-x">×</span><span class="pop-1">1</span><span class="pop-s">1.00</span></div>
    <button class="submitx" type="button">Submit</button>
  </div>

  <div class="dropdown-menu show menux position-absolute">
    <ul class="menu-list">
      <li><a class="dropdown-item">Registration Deposit</a></li>
      <li><a class="dropdown-item">Museum Field Trip</a></li>
      <li><a class="dropdown-item">Late Pick Up Fee</a></li>
      <li><a class="dropdown-item hov">Key</a></li>
      <li><a class="dropdown-item">Field Trip</a></li>
      <li><a class="dropdown-item">Late Payment Fee</a></li>
      <li><a class="dropdown-item">Failed Payment Penalty</a></li>
      <li><a class="dropdown-item">Regular Tuition</a></li>
      <li><a class="dropdown-item">Deposit Credit</a></li>
      <li><a class="dropdown-item">Deposit</a></li>
      <li><a class="dropdown-item">Full Time Meals Service</a></li>
      <li><a class="dropdown-item">Meal Service</a></li>
      <li><a class="dropdown-item">Meal Service - Part Time</a></li>
      <li><a class="dropdown-item">Employee Discount 2025</a></li>
      <li><a class="dropdown-item">Employee Discount 2024</a></li>
    </ul>
    <div class="m-sb position-absolute"><div class="m-up"></div><div class="m-th"></div><div class="m-dn"></div></div>
  </div>
  <svg class="hand position-absolute" viewBox="0 0 13 18"><path d="M4 1.5c0-1.400 2-1.400 2 0V7l.8-.1V6c0-1.200 1.800-1.200 1.800 0v1.200l.7.1c.2-1 1.700-.9 1.700.2v1l.2 0c.2-.8 1.300-.6 1.300.3v3c0 2.500-1 3.600-1.300 5H5c-.5-1.500-2.500-3.800-3.800-6C.4 9.500 2 8.600 3 9.800l1 1.200z" fill="#111" stroke="#fff" stroke-width=".7"/></svg>

  <div class="fab position-absolute rounded-circle d-flex align-items-center justify-content-center">
    <svg viewBox="0 0 24 24"><path d="M4 2h16a2 2 0 0 1 2 2v12a2 2 0 0 1-2 2H7l-5 4V4a2 2 0 0 1 2-2z"/></svg>
  </div>
</div>
</body>
</html>
